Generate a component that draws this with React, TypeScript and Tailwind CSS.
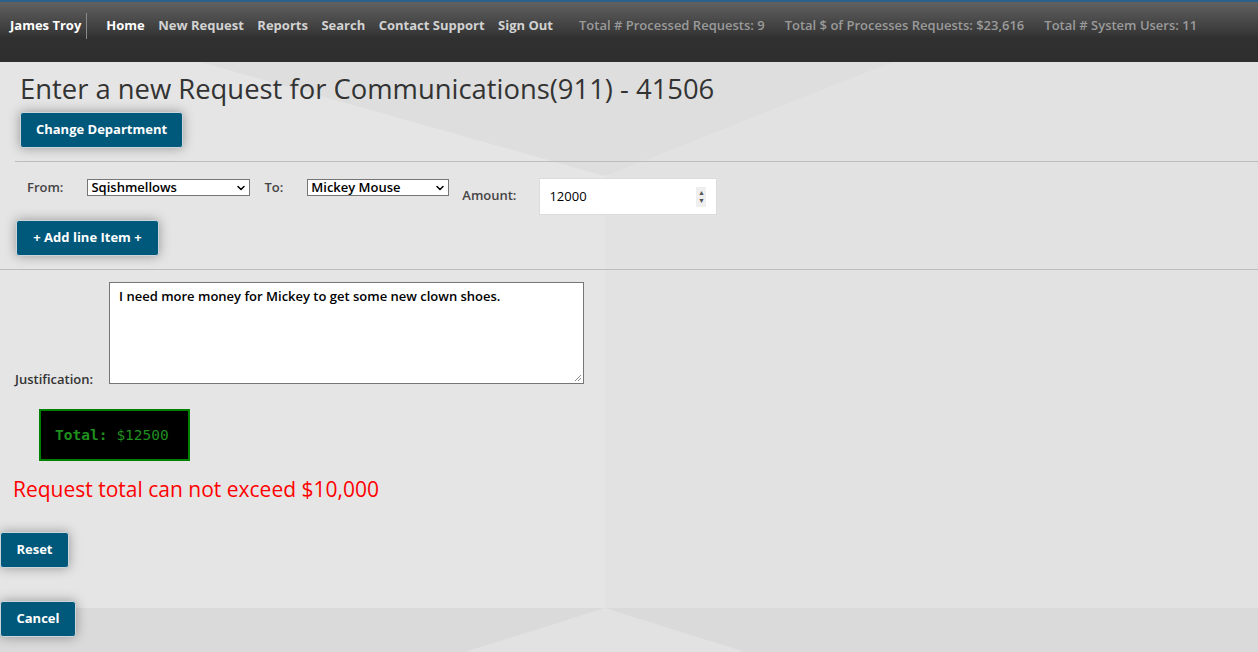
import { ChevronDown } from "lucide-react";

const font = { fontFamily: '"Open Sans", "Liberation Sans", sans-serif' };

function BlueButton({ label, className }: { label: string; className: string }) {
  return (
    <button
      type="button"
      className={`flex items-center justify-center rounded-[3px] border border-[#c9d5db] bg-[#00587a] text-[13px] font-bold text-white shadow-[0_0_12px_rgba(0,0,0,0.35)] ${className}`}
    >
      {label}
    </button>
  );
}

function FakeSelect({ value, className }: { value: string; className: string }) {
  return (
    <div
      className={`flex h-[17px] items-center justify-between border border-[#767676] bg-white pl-[3px] pr-[2px] text-[13px] font-semibold leading-none text-black ${className}`}
    >
      <span>{value}</span>
      <ChevronDown className="h-3 w-3" strokeWidth={3} />
    </div>
  );
}

function Backdrop() {
  return (
    <svg
      className="absolute inset-x-0 top-[62px] bottom-0 h-[590px] w-full"
      viewBox="0 62 1258 590"
      preserveAspectRatio="none"
    >
      <rect x="0" y="62" width="1258" height="590" fill="#e5e5e5" />
      <rect x="605" y="62" width="653" height="546" fill="#e2e2e2" />
      <polygon points="200,62 893,62 605,176" fill="#dedede" />
      <rect x="0" y="608" width="1258" height="44" fill="#dadada" />
      <polygon points="465,652 605,608 745,652" fill="#e2e2e2" />
    </svg>
  );
}

export default function App() {
  return (
    <div className="relative min-h-screen overflow-hidden bg-[#e5e5e5]" style={font}>
      <Backdrop />

      <header className="relative h-[62px] border-t-2 border-[#2b5f8c] bg-[linear-gradient(to_bottom,#616161_0px,#3a3a3a_30px,#303030_36px,#2e2e2e_100%)]">
        <div className="flex h-[47px] items-center text-[13px] font-bold">
          <span className="pl-[10px] text-white">James Troy</span>
          <span className="ml-[5px] h-[26px] w-px bg-[#8a8a8a]" />
          <nav className="ml-[19px] flex items-center gap-[13.5px] text-[#d2d2d2]">
            <span className="text-white">Home</span>
            <span>New Request</span>
            <span>Reports</span>
            <span>Search</span>
            <span>Contact Support</span>
            <span>Sign Out</span>
          </nav>
          <div className="ml-[26px] flex items-center gap-[20px] font-semibold text-[#9a9a9a]">
            <span>Total # Processed Requests: 9</span>
            <span>Total $ of Processes Requests: $23,616</span>
            <span>Total # System Users: 11</span>
          </div>
        </div>
      </header>

      <main className="relative flex flex-col text-[#333]">
        <h1 className="ml-[20px] mt-[11px] text-[27.4px] font-normal leading-[32px] text-[#333]">
          Enter a new Request for Communications(911) - 41506
        </h1>

        <BlueButton label="Change Department" className="ml-[20px] mt-[7px] h-[36px] w-[163px]" />

        <hr className="ml-[15px] mt-[13px] border-t border-[#bdbdbd]" />

        <div className="mt-[17px] flex items-start text-[13px] font-semibold text-[#444]">
          <span className="ml-[27px] mt-[-1px] leading-[18px]">From:</span>
          <FakeSelect value="Sqishmellows" className="ml-[24px] w-[163px]" />
          <span className="ml-[14px] mt-[-1px] leading-[18px]">To:</span>
          <FakeSelect value="Mickey Mouse" className="ml-[24px] w-[142px]" />
          <span className="ml-[13px] mt-[7px] leading-[18px]">Amount:</span>
          <div className="ml-[23px] mt-[-1px] flex h-[37px] w-[178px] items-center justify-between border border-[#dcdcdc] bg-white pl-[9px] pr-[10px] text-black">
            <span className="font-normal">12000</span>
            <span className="flex h-[20px] w-[10px] flex-col items-center justify-center bg-[#efefef] text-[7px] leading-[8px] text-[#555]">
              <span>▲</span>
              <span>▼</span>
            </span>
          </div>
        </div>

        <BlueButton label="+ Add line Item +" className="ml-[16px] mt-[5px] h-[36px] w-[143px]" />

        <hr className="mt-[13px] border-t border-[#bdbdbd]" />

        <div className="mt-[12px] flex items-end">
          <span className="mb-[-3px] ml-[15px] text-[13px] font-semibold leading-[16px] text-[#333]">
            Justification:
          </span>
          <div className="relative ml-[16px] h-[102px] w-[475px] border border-[#767676] bg-white pl-[9px] pr-[12px] pt-[4px] text-[13px] font-semibold text-black">
            I need more money for Mickey to get some new clown shoes.
            <svg className="absolute bottom-[1px] right-[1px] h-[8px] w-[8px]" viewBox="0 0 8 8">
              <path d="M7 1 L1 7 M7 4 L4 7" stroke="#888" strokeWidth="1" />
            </svg>
          </div>
        </div>

        <div
          className="ml-[39px] mt-[25px] flex h-[52px] w-[151px] items-center border-2 border-[#008000] bg-black pl-[14px] pt-[2px] text-[14.5px] text-[#1f8f1f]"
          style={{ fontFamily: '"DejaVu Sans Mono", "Liberation Mono", monospace' }}
        >
          <span className="font-bold">Total:</span>
          <span className="ml-[9px]">$12500</span>
        </div>

        <p className="ml-[13px] mt-[15px] text-[21px] leading-[26px] text-[#ff0000]">
          Request total can not exceed $10,000
        </p>

        <BlueButton label="Reset" className="mt-[30px] h-[36px] w-[69px]" />
        <BlueButton label="Cancel" className="mt-[33px] h-[36px] w-[76px]" />
      </main>
    </div>
  );
}
